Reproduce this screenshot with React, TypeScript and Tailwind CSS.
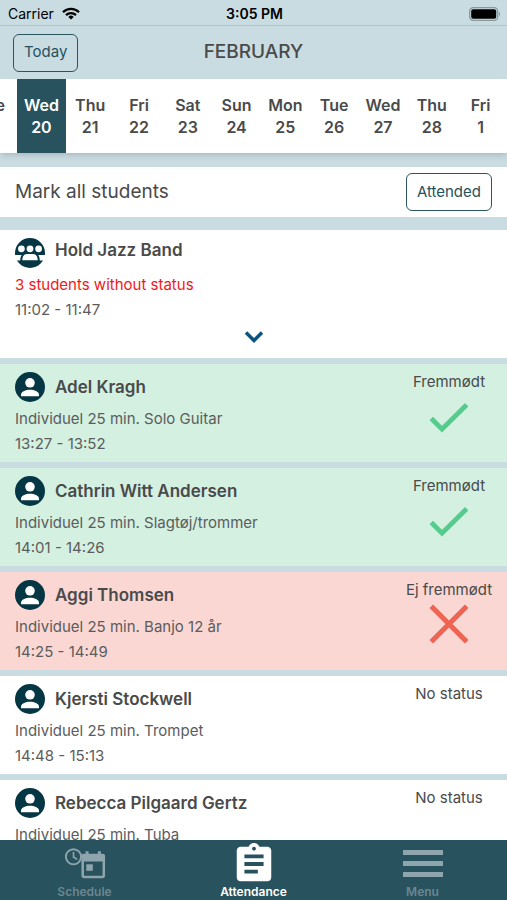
import type { ReactNode } from "react";
import { MdAssignment } from "react-icons/md";

const days = [
  { name: "Wed", date: 20 },
  { name: "Thu", date: 21 },
  { name: "Fri", date: 22 },
  { name: "Sat", date: 23 },
  { name: "Sun", date: 24 },
  { name: "Mon", date: 25 },
  { name: "Tue", date: 26 },
  { name: "Wed", date: 27 },
  { name: "Thu", date: 28 },
  { name: "Fri", date: 1 },
];

type Status = "attended" | "absent" | "none";

type lessonProps = {
  name: string;
  lesson: string;
  time?: string;
  status: Status;
};

const lessons: lessonProps[] = [
  {
    name: "Adel Kragh",
    lesson: "Individuel 25 min. Solo Guitar",
    time: "13:27 - 13:52",
    status: "attended",
  },
  {
    name: "Cathrin Witt Andersen",
    lesson: "Individuel 25 min. Slagtøj/trommer",
    time: "14:01 - 14:26",
    status: "attended",
  },
  {
    name: "Aggi Thomsen",
    lesson: "Individuel 25 min. Banjo 12 år",
    time: "14:25 - 14:49",
    status: "absent",
  },
  {
    name: "Kjersti Stockwell",
    lesson: "Individuel 25 min. Trompet",
    time: "14:48 - 15:13",
    status: "none",
  },
  {
    name: "Rebecca Pilgaard Gertz",
    lesson: "Individuel 25 min. Tuba",
    status: "none",
  },
];

const statusLabel = {
  attended: "Fremmødt",
  absent: "Ej fremmødt",
  none: "No status",
};

const statusBackground = {
  attended: "bg-[#d3f0e1]",
  absent: "bg-[#fad7d3]",
  none: "bg-white",
};

function WifiIcon() {
  return (
    <svg viewBox="0 0 18 13" className="h-[13px] w-[18px]" fill="none" stroke="#000" strokeWidth="2.3">
      <path d="M1 5.2a11.4 11.4 0 0 1 16 0" />
      <path d="M4 8.2a7.2 7.2 0 0 1 10 0" />
      <path d="M9 12.6 6.3 9.9a3.8 3.8 0 0 1 5.4 0z" fill="#000" stroke="none" />
    </svg>
  );
}

function BatteryIcon() {
  return (
    <svg viewBox="0 0 32 14" className="h-3.5 w-8">
      <rect x="0.7" y="0.7" width="28" height="12.6" rx="3.6" fill="none" stroke="#8a979b" strokeWidth="1.3" />
      <rect x="2.2" y="2.2" width="25" height="9.6" rx="2" fill="#000" />
      <path d="M30 4.8c1.4.6 1.4 3.8 0 4.4z" fill="#8a979b" />
    </svg>
  );
}

function PersonIcon() {
  return (
    <svg viewBox="0 0 30 30" className="size-[30px] shrink-0">
      <circle cx="15" cy="15" r="15" fill="#053644" />
      <circle cx="15" cy="10.8" r="4.8" fill="#fff" />
      <path d="M6 24.2v-1.4c0-3.2 5-5 9-5s9 1.8 9 5v1.4z" fill="#fff" />
    </svg>
  );
}

function GroupIcon() {
  return (
    <svg viewBox="0 0 30 30" className="size-[30px] shrink-0">
      <circle cx="15" cy="15" r="15" fill="#053644" />
      <g fill="#fff">
        <circle cx="6.4" cy="10.8" r="3.4" />
        <circle cx="15" cy="10.8" r="3.4" />
        <circle cx="23.6" cy="10.8" r="3.4" />
        <path d="M0 17h6.700c-.9 1.300-1.400 3-1.500 5.500H0z" />
        <path d="M30 17h-6.700c.9 1.300 1.400 3 1.500 5.500H30z" />
        <path d="M7.300 22.300c0-4 1.700-6.300 4.700-6.300h6c3 0 4.700 2.300 4.700 6.300z" />
      </g>
    </svg>
  );
}

function CheckIcon() {
  return (
    <svg viewBox="0 0 40 32" className="mt-2.5 h-8 w-10" fill="none" stroke="#55cc8d" strokeWidth="4.8">
      <path d="M2.300 16.500 13 27.200 37.700 2.700" />
    </svg>
  );
}

function CrossIcon() {
  return (
    <svg viewBox="0 0 40 40" className="mt-1 size-10" fill="none" stroke="#ee6352" strokeWidth="5">
      <path d="m2.300 2.300 35.400 35.400M37.700 2.300 2.300 37.700" />
    </svg>
  );
}

function ScheduleIcon() {
  return (
    <svg viewBox="0 0 42 32" className="h-8 w-[42px]" fill="none" stroke="currentColor">
      <circle cx="9.5" cy="8.800" r="7.600" strokeWidth="1.9" />
      <path d="M9.500 4v5l3.600 2.400" strokeWidth="1.7" />
      <path d="M18.700 13v14.500a1.500 1.500 0 0 0 1.500 1.500h18.100a1.500 1.500 0 0 0 1.500-1.500V13" strokeWidth="2.500" />
      <path
        d="M17.400 13.500V8a2.200 2.200 0 0 1 2.200-2.200h2V3.300h3v2.500h9.300V3.300h3v2.500h2A2.200 2.200 0 0 1 41.100 8v5.500z"
        fill="currentColor"
        stroke="none"
      />
      <rect x="22.300" y="16.300" width="6.500" height="6.500" fill="currentColor" stroke="none" />
    </svg>
  );
}

function MenuIcon() {
  return (
    <svg viewBox="0 0 40 28" className="h-7 w-10" fill="currentColor">
      <rect y="0" width="40" height="5" />
      <rect y="11" width="40" height="5" />
      <rect y="22" width="40" height="5" />
    </svg>
  );
}

function LessonCard(props: lessonProps) {
  return (
    <li className={`flex h-[98px] justify-between pl-[15px] ${statusBackground[props.status]}`}>
      <div className="pt-2">
        <div className="flex items-center gap-2.5">
          <PersonIcon />
          <h2 className="text-[17px] leading-[30px] font-semibold">{props.name}</h2>
        </div>
        <p className="pt-1 text-[15px] leading-[25px] text-[#5c5c5c]">{props.lesson}</p>
        {props.time && <p className="text-[15px] leading-[25px] text-[#5c5c5c]">{props.time}</p>}
      </div>
      <div className="flex w-[116px] flex-col items-center pt-2">
        <span className="text-[15px] leading-5">{statusLabel[props.status]}</span>
        {props.status === "attended" && <CheckIcon />}
        {props.status === "absent" && <CrossIcon />}
      </div>
    </li>
  );
}

type tabProps = {
  label: string;
  active?: boolean;
  children: ReactNode;
};

function Tab(props: tabProps) {
  return (
    <a
      href="#"
      className={`flex flex-1 flex-col items-center text-xs font-semibold ${
        props.active ? "text-white" : "text-[#8fa5ad]"
      }`}
    >
      <span className="flex h-11 items-center pt-1">{props.children}</span>
      <span className={props.active ? "leading-4" : "leading-4 text-[#6c8790]"}>{props.label}</span>
    </a>
  );
}

export default function App() {
  return (
    <div className="flex h-screen flex-col overflow-hidden bg-[#c9dce2] font-['Inter',sans-serif] text-[#4a4a4a]">
      <header className="shrink-0">
        <div className="grid h-[26px] grid-cols-3 items-center border-b border-[#b4c5ca] pt-0.5 pr-1.5 pl-2 text-sm text-black">
          <div className="flex items-center gap-2">
            <span>Carrier</span>
            <WifiIcon />
          </div>
          <span className="text-center font-semibold">3:05 PM</span>
          <div className="flex justify-end">
            <BatteryIcon />
          </div>
        </div>
        <div className="grid h-[53px] grid-cols-3 items-center px-[13px]">
          <div>
            <button className="h-[38px] rounded-md border border-[#2b5560] px-2.5 text-[15px] text-[#25525e]">
              Today
            </button>
          </div>
          <h1 className="text-center text-[19px] font-medium">FEBRUARY</h1>
        </div>
      </header>

      <nav className="z-10 flex h-[74px] shrink-0 overflow-hidden bg-white pr-0.5 text-base leading-[22px] font-semibold shadow-md">
        <div className="flex w-[17px] shrink-0 justify-end pt-[15px] pr-3">
          <span>Tue</span>
        </div>
        {days.map((day, i) => (
          <button
            key={day.date}
            className={`flex flex-1 flex-col items-center pt-[15px] ${
              i === 0 ? "bg-[#27525e] text-white" : ""
            }`}
          >
            <span>{day.name}</span>
            <span>{day.date}</span>
          </button>
        ))}
      </nav>

      <main className="min-h-0 flex-1 overflow-y-auto pt-3.5 [scrollbar-width:none]">
        <div className="flex h-[50px] items-center justify-between bg-white px-[15px]">
          <span className="text-[19px]">Mark all students</span>
          <button className="h-[38px] rounded-md border border-[#2b5560] px-2.5 text-[15px] text-[#25525e]">
            Attended
          </button>
        </div>

        <section className="mt-[13px] flex h-32 flex-col bg-white px-[15px] pt-2">
          <div className="flex items-start gap-2.5">
            <GroupIcon />
            <h2 className="text-[17px] leading-6 font-semibold">Hold Jazz Band</h2>
          </div>
          <p className="pt-1 text-[15px] leading-[25px] text-[#f01818]">3 students without status</p>
          <p className="text-[15px] leading-[25px] text-[#5c5c5c]">11:02 - 11:47</p>
          <button aria-label="Show students" className="flex justify-center pt-2">
            <svg viewBox="0 0 20 14" className="h-3.5 w-5" fill="none" stroke="#075580" strokeWidth="3.5">
              <path d="m2 2.500 8 8 8-8" />
            </svg>
          </button>
        </section>

        <ul className="flex flex-col gap-1.5 pt-1.5">
          {lessons.map((lesson) => (
            <LessonCard key={lesson.name} {...lesson} />
          ))}
        </ul>
      </main>

      <footer className="flex h-[60px] shrink-0 bg-[#27525e]">
        <Tab label="Schedule">
          <ScheduleIcon />
        </Tab>
        <Tab label="Attendance" active>
          <MdAssignment className="size-[46px]" />
        </Tab>
        <Tab label="Menu">
          <MenuIcon />
        </Tab>
      </footer>
    </div>
  );
}
